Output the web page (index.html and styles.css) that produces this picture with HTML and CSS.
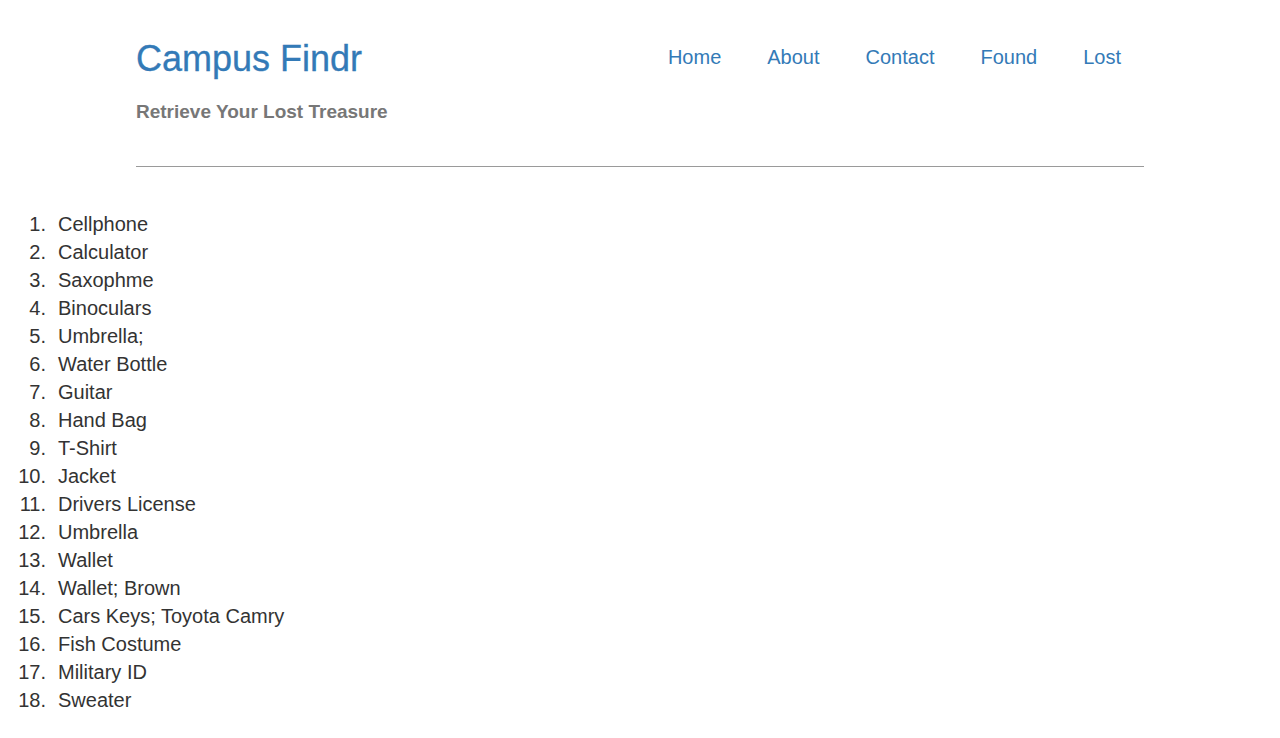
FILE: index.html
```html
<!DOCTYPE html>
<html lang="en">
<head>
<meta charset="utf-8">
<title>Campus Findr</title>
<link rel="stylesheet" href="styles.css">
</head>
<body>
<header class="site-header">
  <div class="header-row">
    <h1 class="brand">Campus Findr</h1>
    <nav class="nav">
      <a href="#">Home</a>
      <a href="#">About</a>
      <a href="#">Contact</a>
      <a href="#">Found</a>
      <a href="#">Lost</a>
    </nav>
  </div>
  <p class="tagline">Retrieve Your Lost Treasure</p>
  <hr class="divider">
</header>
<ol class="items">
  <li>Cellphone</li>
  <li>Calculator</li>
  <li>Saxophme</li>
  <li>Binoculars</li>
  <li>Umbrella;</li>
  <li>Water Bottle</li>
  <li>Guitar</li>
  <li>Hand Bag</li>
  <li>T-Shirt</li>
  <li>Jacket</li>
  <li>Drivers License</li>
  <li>Umbrella</li>
  <li>Wallet</li>
  <li>Wallet; Brown</li>
  <li>Cars Keys; Toyota Camry</li>
  <li>Fish Costume</li>
  <li>Military ID</li>
  <li>Sweater</li>
</ol>
</body>
</html>
```
FILE: styles.css
```css
html, body {
  margin: 0;
  padding: 0;
  background: #fff;
}
body {
  font-family: "Liberation Sans", Arial, Helvetica, sans-serif;
  color: #333;
}
.site-header {
  margin: 0 136px;
  padding-top: 39px;
}
.header-row {
  display: flex;
  justify-content: space-between;
  align-items: flex-start;
}
.brand {
  margin: 0;
  font-size: 36px;
  line-height: 40px;
  font-weight: normal;
  color: #337ab7;
  -webkit-text-stroke: 0.3px #337ab7;
}
.nav {
  display: flex;
  margin-top: 4px;
}
.nav a {
  font-size: 20px;
  line-height: 28px;
  color: #337ab7;
  text-decoration: none;
  padding: 0 23px;
}
.tagline {
  margin: 21px 0 0;
  font-size: 19px;
  line-height: 24px;
  font-weight: bold;
  color: #777;
}
.divider {
  margin: 42px 0 0;
  border: 0;
  height: 1px;
  background: #9a9a9a;
}
.items {
  list-style: none;
  margin: 43px 0 0;
  padding: 0;
  counter-reset: item;
  font-size: 20px;
  line-height: 28px;
  color: #333;
}
.items li {
  counter-increment: item;
  display: flex;
}
.items li::before {
  content: counter(item) ".";
  width: 46px;
  text-align: right;
  margin-right: 12px;
  flex: none;
}
```
